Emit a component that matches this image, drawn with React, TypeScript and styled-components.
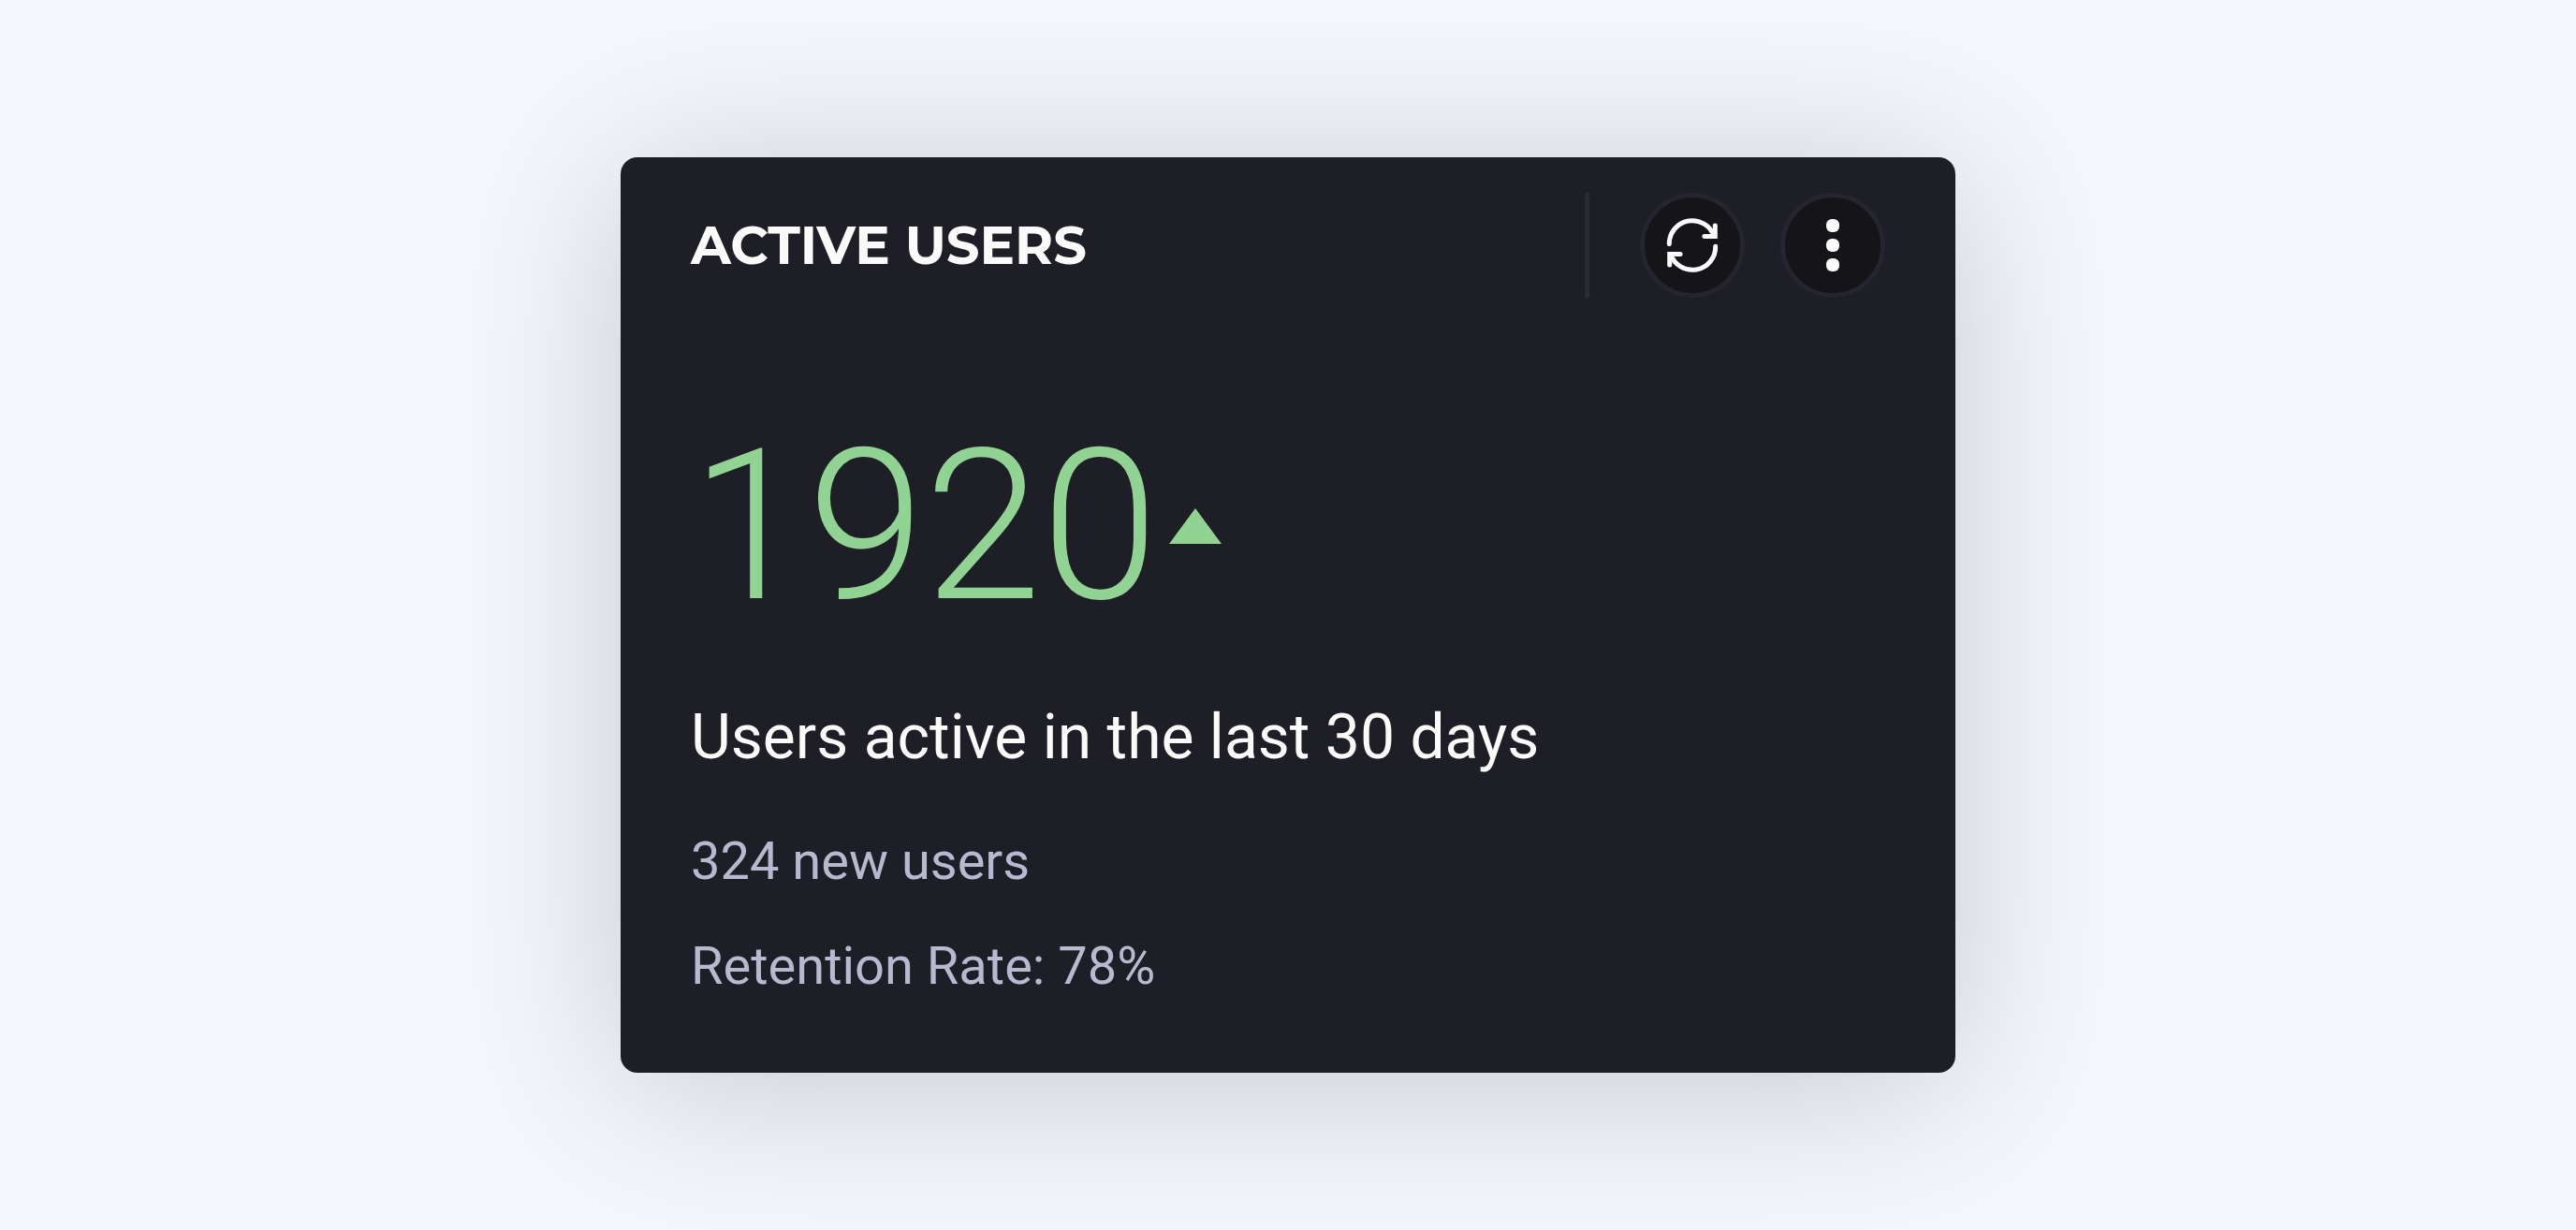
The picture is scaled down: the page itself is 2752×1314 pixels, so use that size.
import styled, { createGlobalStyle } from "styled-components";

const GlobalStyle = createGlobalStyle`
  * { box-sizing: border-box; }
  body { margin: 0; background: #f5f7fc; }
`;

const Page = styled.main`
  min-height: 100vh;
  display: flex;
  align-items: center;
  justify-content: center;
  overflow: hidden;
  font-family: Roboto, "Liberation Sans", sans-serif;
`;

const Card = styled.article`
  width: 100%;
  max-width: 1426px;
  background: #1e1e26;
  border-radius: 18px;
  padding: 38px 75px 58px;
  box-shadow: 0 15px 188px rgba(0, 0, 0, 0.19);
`;

const Header = styled.header`
  display: flex;
  align-items: center;
  justify-content: space-between;
`;

const Title = styled.h2`
  margin: 0;
  color: #fafafa;
  font-family: Montserrat, Inter, sans-serif;
  font-size: 56px;
  line-height: 112px;
  font-weight: 700;
`;

const Actions = styled.div`
  display: flex;
  align-items: center;
  gap: 38px;
  padding-left: 54px;
  border-left: 5px solid #2b2b36;
`;

const IconButton = styled.button`
  display: grid;
  place-items: center;
  width: 112px;
  height: 112px;
  padding: 0;
  border: 5px solid #25252f;
  border-radius: 50%;
  background: #141419;
  color: #fafafa;
  cursor: pointer;
`;

const Metric = styled.div`
  display: flex;
  align-items: center;
  gap: 12px;
  margin-top: 112px;
  color: #91d392;
`;

const Value = styled.strong`
  font-size: 225px;
  line-height: 264px;
  font-weight: 300;
`;

const Caption = styled.p`
  margin: 56px 0 0;
  color: #fafafa;
  font-size: 66px;
  line-height: 76px;
`;

const Details = styled.ul`
  margin: 38px 0 0;
  padding: 0;
  list-style: none;
  color: #b9b8ce;
  font-size: 56px;
  line-height: 112px;
`;

function RefreshIcon() {
  return (
    <svg
      width="56"
      height="56"
      viewBox="0 0 56 56"
      fill="none"
      stroke="currentColor"
      strokeWidth="5"
      strokeLinecap="round"
      strokeLinejoin="round"
      overflow="visible"
      aria-hidden="true"
    >
      <path d="M3.3 26.8A24.6 24.6 0 0 1 51.2 18.4" />
      <path d="M52.3 7V18.5H40.9" strokeLinejoin="miter" />
      <path d="M52.7 29.2A24.6 24.6 0 0 1 4.8 37.6" />
      <path d="M3.7 49V37.5H15.1" strokeLinejoin="miter" />
    </svg>
  );
}

function MoreIcon() {
  return (
    <svg width="14" height="56" viewBox="0 0 14 56" fill="currentColor" aria-hidden="true">
      <rect width="14" height="14" rx="6" />
      <rect y="21" width="14" height="14" rx="6" />
      <rect y="42" width="14" height="14" rx="6" />
    </svg>
  );
}

export default function App() {
  return (
    <Page>
      <GlobalStyle />
      <Card>
        <Header>
          <Title>ACTIVE USERS</Title>
          <Actions>
            <IconButton type="button" aria-label="Refresh">
              <RefreshIcon />
            </IconButton>
            <IconButton type="button" aria-label="More options">
              <MoreIcon />
            </IconButton>
          </Actions>
        </Header>
        <Metric>
          <Value>1920</Value>
          <svg width="56" height="38" viewBox="0 0 56 38" fill="currentColor" role="img" aria-label="Up">
            <path d="M28 0L56 38H0Z" />
          </svg>
        </Metric>
        <Caption>Users active in the last 30 days</Caption>
        <Details>
          <li>324 new users</li>
          <li>Retention Rate: 78%</li>
        </Details>
      </Card>
    </Page>
  );
}
